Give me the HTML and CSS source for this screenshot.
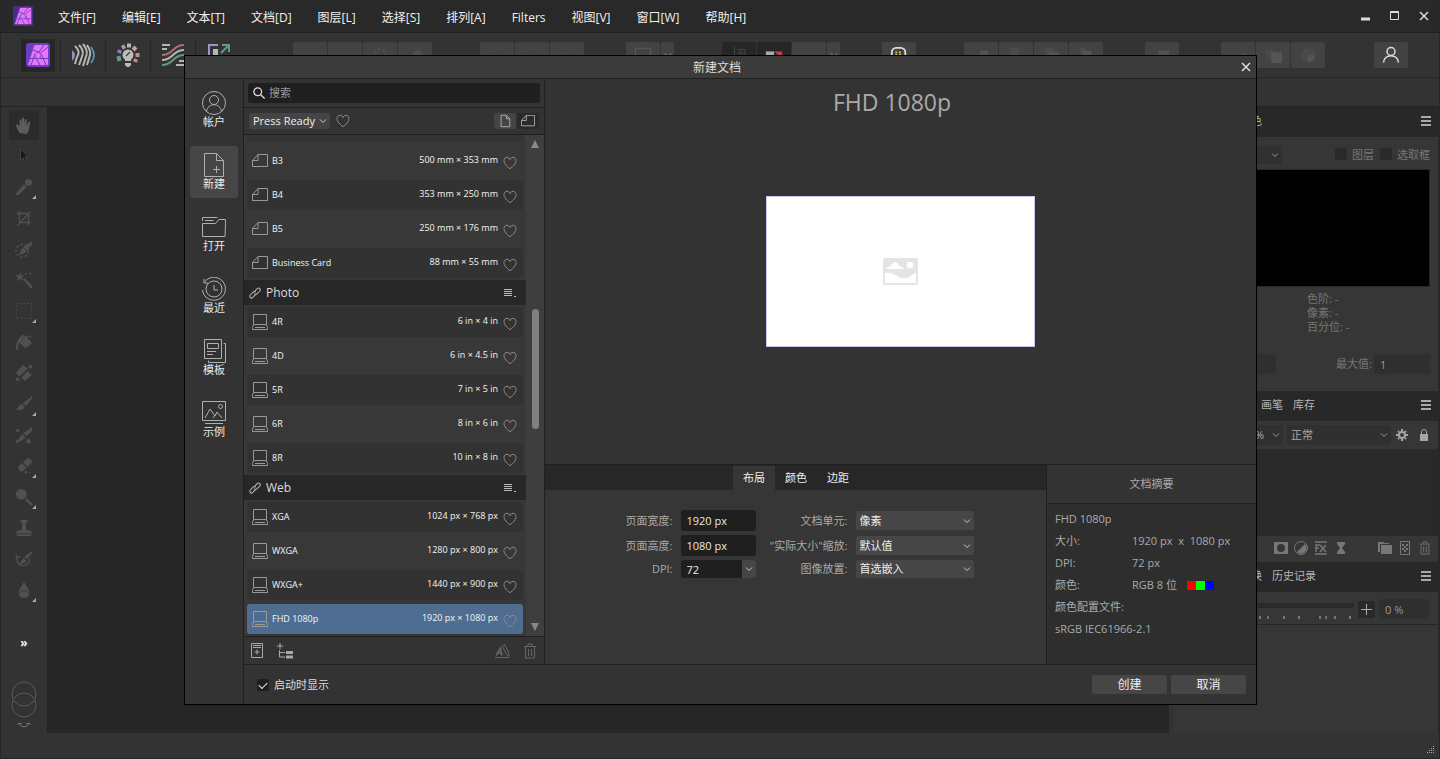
FILE: index.html
```html
<!DOCTYPE html>
<html lang="zh-CN">
<head>
  <meta charset="UTF-8">
  <meta name="viewport" content="width=device-width, initial-scale=1.0">
  <title>新建文档</title>
  <link rel="stylesheet" href="styles.css">
</head>
<body>
  <!-- shared icons -->
  <svg class="sprite" aria-hidden="true">
    <symbol id="heart" viewBox="0 0 14 14"><path d="M7 12.7C4 10.6 1 7.600 1 4.600 1 2.600 2.300 1.300 4 1.300c1.500 0 2.600.9 3 2.400.4-1.500 1.500-2.400 3-2.400 1.700 0 3 1.300 3 3.300 0 3-3 6-6 8.100z"/></symbol>
    <symbol id="land" viewBox="0 0 16 14"><path d="M.5 12.500V6.500L6 .5h9.500v12zM.5 6.500H6v-6"/></symbol>
    <symbol id="screen" viewBox="0 0 16 16"><path d="M1.500 10.500V.5h13v10zM1.500 10.500l-1 3v2h15v-2l-1-3M3 13.500h10"/></symbol>
    <symbol id="link" viewBox="0 0 12 12"><g transform="rotate(-45 6 6)"><path d="M5.500 7.500H1a1.500 1.500 0 0 1-1.500-1.500A2 2 0 0 1 1.500 4H5a2 2 0 0 1 2 2M6.500 4.500H11a1.500 1.500 0 0 1 1.500 1.500A2 2 0 0 1 10.500 8H7a2 2 0 0 1-2-2"/></g></symbol>
    <symbol id="caret" viewBox="0 0 8 8"><path d="M1 2.500 4 5.500 7 2.500"/></symbol>
    <symbol id="lines" viewBox="0 0 14 10"><path d="M1 1.500h8M1 3.500h8M1 5.500h8M1 7.500h8M11 8.500h2"/></symbol>
    <symbol id="burger" viewBox="0 0 10 10"><path d="M0 1h10M0 5h10M0 9h10"/></symbol>
    <symbol id="cross" viewBox="0 0 10 10"><path d="M1 1l8 8M9 1 1 9"/></symbol>
    <symbol id="aperture" viewBox="0 0 24 24">
      <path fill="#e874f7" d="M8.500 2H21q1 0 1 1v18q0 1-1 1H2z"/>
      <path fill="none" stroke="#6b3fc4" d="M7 7l7 2.500M18 2l-5 7M9 11 5 22M2 15.500h8M10 15l4 7M13 15.500h9M15 11l5 11M14.500 10 22 4"/>
      <circle cx="12" cy="12.500" r="3" fill="#e874f7" stroke="#8a50d8"/>
    </symbol>
    <symbol id="bin" viewBox="0 0 14 16"><path d="M1 3.500h12M5 3V1h4v2M2.500 4v11h9V4M5.500 6v7M8.500 6v7"/></symbol>
  </svg>

  <div class="app">
    <header class="menubar">
      <svg class="logo" viewBox="0 0 24 24"><rect width="24" height="24" rx="1" fill="#4b2b86"/><use href="#aperture"/></svg>
      <nav class="menus">
        <button>文件[F]</button>
        <button>编辑[E]</button>
        <button>文本[T]</button>
        <button>文档[D]</button>
        <button>图层[L]</button>
        <button>选择[S]</button>
        <button>排列[A]</button>
        <button>Filters</button>
        <button>视图[V]</button>
        <button>窗口[W]</button>
        <button>帮助[H]</button>
      </nav>
      <div class="win-buttons">
        <button aria-label="最小化"><svg viewBox="0 0 10 10"><path d="M0 8h9" stroke-width="3"/></svg></button>
        <button aria-label="最大化"><svg viewBox="0 0 10 10"><path d="M.5.5h8v8h-8zM0 1.500h9" stroke-width="1"/></svg></button>
        <button aria-label="关闭"><svg><use href="#cross"/></svg></button>
      </div>
    </header>

    <div class="toolbar">
      <div class="personas">
        <button class="active" aria-label="照片"><svg viewBox="0 0 24 24"><rect width="24" height="24" rx="3" fill="#6b3fc4"/><use href="#aperture"/></svg></button>
        <button aria-label="液化"><svg viewBox="0 0 24 24" fill="none" stroke-width="2"><path fill="#a38bc0" d="M1 7q6 5 0 11z"/><path stroke="#b5b5b5" d="M4 3q5 5 3 9t-3 9M8 2q5 5 3.500 10T8 22M12 1q5 6 3.500 11T12 23M16 2q4 6 3 10t-3 10"/><path stroke="#5d8aa8" d="M20 4q3 4 3 8t-3 8"/></svg></button>
        <button aria-label="冲印"><svg viewBox="0 0 24 24" fill="none" stroke-width="4"><path stroke="#b58fb0" d="M6 5 9 3"/><path stroke="#b5b5b5" d="M11 2.500h4"/><path stroke="#c9a0a5" d="M17 4l3 3"/><path stroke="#c58a90" d="M21.500 10v4M20 16l-1 3"/><path stroke="#8e86b8" d="M4 7l-1 3"/><path stroke="#5da087" d="M2.500 13l1 5"/><circle cx="12" cy="12" r="5.500" fill="#bcbcbc"/><path fill="#bcbcbc" d="M9 15h6v3H9zM9 20h6v2l-2 2h-2l-2-2z"/><path stroke="#444" stroke-width="1.500" d="M10 13l4-4"/></svg></button>
        <button aria-label="色调映射"><svg viewBox="0 0 24 24" fill="none" stroke-width="2"><path stroke="#b5b5b5" d="M1 2h8M1 6h5M18 18h5M15 22h8"/><path stroke="#a87075" d="M1 12c12 0 10-10 22-10"/><path stroke="#b5b5b5" d="M1 17c12 0 10-10 22-10"/><path stroke="#5f9c7c" d="M1 22c12 0 10-10 22-10"/></svg></button>
        <button aria-label="导出"><svg viewBox="0 0 24 24" fill="none" stroke-width="2"><path stroke="#9a97c4" d="M2 14V2h9"/><path fill="#b5b5b5" d="M6 6h5v12H6z"/><path stroke="#5f9c86" d="M14 10l8-8M15 2h7v7"/></svg></button>
      </div>
      <div class="tool-group first">
        <button><svg viewBox="0 0 20 20"><path d="M2 13h8"/></svg></button>
        <button><svg viewBox="0 0 20 20"><path d="M4 15a7 7 0 0 1 12-6l-6 6"/></svg></button>
        <button><svg viewBox="0 0 20 20"><circle cx="10" cy="10" r="6" stroke-dasharray="3 2" stroke-width="4"/></svg></button>
        <button><svg viewBox="0 0 20 20"><path d="M3 3l9 9"/><circle cx="13" cy="11" r="6" fill="#505050"/></svg></button>
      </div>
      <div class="tool-group">
        <button><svg viewBox="0 0 20 20"><path stroke-dasharray="2 2" d="M2 3h16v12H2z"/></svg></button>
        <button><svg viewBox="0 0 20 20"><path stroke-dasharray="2 2" d="M2 3h16v12H2z"/></svg></button>
        <button><svg viewBox="0 0 20 20"><path stroke-dasharray="2 2" d="M2 3h16v12H2zM6 7h8v5H6z"/></svg></button>
      </div>
      <div class="tool-group near">
        <button><svg viewBox="0 0 20 20"><path stroke="#606060" d="M1.500 2.500h17v14h-17z"/></svg></button>
        <button class="drop" aria-label="选项"><svg><use href="#caret"/></svg></button>
      </div>
      <div class="tool-group">
        <button class="dark"><svg viewBox="0 0 20 20"><path stroke="#4a4a4a" d="M5 1v14M8 4h9v9M12 4v9M8 8h9"/></svg></button>
        <button class="dark"><svg viewBox="0 0 20 20"><path fill="#aaa" stroke="none" d="M1 6h9v5H1z"/><path fill="#d23545" stroke="none" d="M10 6h9v8z"/></svg></button>
        <button><svg viewBox="0 0 20 20"><path d="M3 11l4-4 4 4"/></svg></button>
        <button class="drop" aria-label="选项"><svg><use href="#caret"/></svg></button>
      </div>
      <div class="tool-group near">
        <button aria-label="助手"><svg viewBox="0 0 20 20"><rect x="2" y="2" width="15" height="13" rx="5" stroke="#ddd" stroke-width="2"/><path stroke="#e0c060" stroke-width="2" stroke-dasharray="2 2" d="M6 7h7M6 10h7"/></svg></button>
      </div>
      <div class="tool-group">
        <button><svg viewBox="0 0 20 20"><path fill="#535353" stroke="none" d="M9 5h9v9H9z"/></svg></button>
        <button><svg viewBox="0 0 20 20"><path fill="#4b4b4b" stroke="none" d="M3 2h11v10H3z"/></svg></button>
        <button><svg viewBox="0 0 20 20"><path fill="#4b4b4b" stroke="none" d="M3 2h10v8H3z"/><path fill="#555" stroke="none" d="M8 7h11v9H8z"/></svg></button>
        <button><svg viewBox="0 0 20 20"><path fill="#4b4b4b" stroke="none" d="M3 2h6v6H3z"/><path fill="#555" stroke="none" d="M6 5h10v9H6z"/></svg></button>
      </div>
      <div class="tool-group near">
        <button><svg viewBox="0 0 20 20"><path fill="#525252" stroke="none" d="M6 5h12v5H6z"/></svg></button>
      </div>
      <div class="tool-group near">
        <button><svg viewBox="0 0 20 20"><path fill="#555" stroke="none" d="M15 8h3v8h-3z"/></svg></button>
        <button><svg viewBox="0 0 20 20"><circle cx="7" cy="9" r="6" stroke="none" fill="#494949"/><path fill="#555" stroke="none" d="M8 7h12v12H8z"/></svg></button>
        <button><svg viewBox="0 0 20 20"><circle cx="10" cy="10" r="8" stroke="none" fill="#4a4a4a"/><path fill="#555" stroke="none" d="M10 10h8a8 8 0 0 1-8 8z"/></svg></button>
      </div>
      <button class="account" aria-label="帐户"><svg viewBox="0 0 18 18"><circle cx="9" cy="5.500" r="4"/><path d="M1.500 16.500c1-9 14-9 15 0"/></svg></button>
    </div>

    <div class="context-bar"></div>

    <main class="workspace">
      <aside class="tools">
        <button class="active" aria-label="视图工具"><svg viewBox="0 0 20 20"><path d="M5 19C3 16 2 13 1 10l2-1 2 3V4h2v6l1-8h2v8l1-7 2 1v7l2-5 2 1-2 10-2 3z" class="lit"/></svg></button>
        <button aria-label="移动工具"><svg viewBox="0 0 20 20"><path fill="#181818" stroke="#484848" stroke-width="1" d="M6 2v13l3-3 2 5 2-1-2-5h4z"/></svg></button>
        <button class="more" aria-label="颜色选取器"><svg viewBox="0 0 20 20"><circle cx="15" cy="5" r="4"/><path d="M10 7l3 3-9 9H1v-2z"/></svg></button>
        <button aria-label="裁剪工具"><svg viewBox="0 0 20 20"><path class="line" d="M5 2v13h13M2 5h13v13M3 18 17 3"/></svg></button>
        <button aria-label="选择画笔"><svg viewBox="0 0 20 20"><circle class="line" cx="8" cy="12" r="7" stroke-dasharray="3 2"/><path d="M19 1v4l-6 6-4-3zM9 9l4 3q-3 5-9 4 2-1 2-3 0-3 3-4z"/></svg></button>
        <button aria-label="魔棒"><svg viewBox="0 0 20 20"><path d="M6 1l1 4 4-1-3 3 2 4-4-2-4 2 1-4-3-3 4 1zM9 9l2-1 8 8v3h-2zM11 2h2v2h-2zM16 2h2v2h-2z"/></svg></button>
        <button class="more" aria-label="选框"><svg viewBox="0 0 20 20"><path class="thin" stroke-dasharray="2 2" d="M1.500 1.500h17v17h-17z"/></svg></button>
        <button aria-label="填充"><svg viewBox="0 0 20 20"><path d="M3 19H1q0-13 8-17l2 1-7 9zM12 3l7 8-7 6-7-6z"/><path class="line" d="M10 5q4-3 8 0"/></svg></button>
        <button aria-label="渐变"><svg viewBox="0 0 20 20"><path d="M9 1l5 4-9 9-4-4zM14 8l5 4-8 7-4-4z"/><path class="cut" d="M3 17 17 3"/><circle cx="3" cy="17" r="2"/><circle cx="17" cy="3" r="2"/></svg></button>
        <button class="more" aria-label="画笔"><svg viewBox="0 0 20 20"><path d="M19 1v3l-7 8-3-3zM8 10l3 3q-3 5-10 3 3-1 3-3 1-3 4-3z"/></svg></button>
        <button aria-label="像素画笔"><svg viewBox="0 0 20 20"><path d="M19 1v4l-6 6-4-3zM8 9l4 4-6 4-3-1z"/><circle cx="3" cy="5" r="2"/><circle cx="3" cy="17" r="2"/><circle cx="15" cy="17" r="2.500"/></svg></button>
        <button class="more" aria-label="擦除"><svg viewBox="0 0 20 20"><path d="M12 3q3-3 6 0 2 3-1 5l-3 3-5-5zM8 7l5 5-3 3q-3 2-5 0-3-3-1-5z"/><circle cx="12" cy="17" r="1.500"/><circle cx="17" cy="17" r="1"/></svg></button>
        <button class="more" aria-label="减淡"><svg viewBox="0 0 20 20"><circle cx="7" cy="7" r="6"/><path d="M11 13l2-2 7 7-2 2z"/></svg></button>
        <button aria-label="克隆"><svg viewBox="0 0 20 20"><path d="M6 1h8v2l-2 2q0 6 1 7l6 2v2H1v-2l6-2q1-1 1-7L6 3zM2 17h16v2H2z"/></svg></button>
        <button aria-label="撤消画笔"><svg viewBox="0 0 20 20"><path class="line" d="M3 7a7 7 0 1 0 13 2M1 4l1 5 4-2"/><path d="M19 1v3l-6 6-3-2zM9 9l4 3q-3 4-8 3l2-3z"/></svg></button>
        <button class="more" aria-label="模糊"><svg viewBox="0 0 20 20"><path d="M10 1q6 9 6 12a6 6 0 0 1-12 0Q4 10 10 1z"/><path class="cut" d="M5 13q5-4 10 0"/></svg></button>
        <button class="expand">»</button>
        <svg class="swatches" viewBox="0 0 26 48"><circle cx="13" cy="13" r="12"/><circle cx="13" cy="24" r="12"/><path stroke="#777" d="M8 42c1 5 9 5 10 0M6 44l2-2 3 1M20 44l-2-2-3 1"/></svg>
      </aside>

      <div class="canvas"></div>

      <aside class="panels">
        <div class="panel-head"><span>色</span><button aria-label="菜单"><svg><use href="#burger"/></svg></button></div>
        <div class="panel-body histogram">
          <div class="channel-row">
            <span class="select channel"><select aria-label="通道"></select><svg><use href="#caret"/></svg></span>
            <label><input type="checkbox">图层</label>
            <label><input type="checkbox">选取框</label>
          </div>
          <div class="graph"></div>
          <div class="stats">
            <p>色阶: -</p>
            <p>像素: -</p>
            <p>百分位: -</p>
          </div>
          <div class="range-row">
            <input type="text" class="field min" aria-label="最小值">
            <label for="max">最大值:</label>
            <input type="text" class="field" id="max" value="1">
          </div>
        </div>

        <div class="panel-head"><span>画笔</span><span>库存</span><button aria-label="菜单"><svg><use href="#burger"/></svg></button></div>
        <div class="blend-row">
          <span class="select opacity"><select aria-label="不透明度"><option>%</option></select><svg><use href="#caret"/></svg></span>
          <span class="select blend"><select aria-label="混合模式"><option>正常</option></select><svg><use href="#caret"/></svg></span>
          <button aria-label="设置"><svg viewBox="0 0 12 12"><circle cx="6" cy="6" r="3" fill="none" stroke="#a5a5a5" stroke-width="2"/><path stroke="#a5a5a5" stroke-width="2" d="M6 0v2M6 10v2M0 6h2M10 6h2M2 2l1 1M9 9l1 1M10 2 9 3M3 9l-1 1"/></svg></button>
          <button aria-label="锁定"><svg viewBox="0 0 12 12"><path fill="#a5a5a5" d="M2 5h8v7H2z"/><path fill="none" stroke="#a5a5a5" d="M3.500 6V3a2.500 2.500 0 0 1 5 0v3"/></svg></button>
        </div>
        <div class="layer-list"></div>
        <div class="layer-tools">
          <button aria-label="蒙版"><svg viewBox="0 0 14 14"><path fill="#777" fill-rule="evenodd" d="M0 1h14v12H0zM7 3a4 4 0 1 0 0 8 4 4 0 0 0 0-8z"/></svg></button>
          <button aria-label="调整"><svg viewBox="0 0 14 14"><circle cx="7" cy="7" r="6.500" fill="none" stroke="#777"/><path fill="#777" d="M11 3a5.500 5.500 0 0 1-8 8z"/></svg></button>
          <button aria-label="效果"><svg viewBox="0 0 14 14"><path fill="none" stroke="#777" stroke-width="1.500" d="M1 1h12M1 13h12M2 11V4h4M2 7h3M6 4l6 7M12 4l-6 7"/></svg></button>
          <button aria-label="实时滤镜"><svg viewBox="0 0 14 14"><path fill="#777" d="M3 1h8v2L8 7l3 4v2H3v-2l3-4-3-4z"/></svg></button>
          <button class="push" aria-label="编组"><svg viewBox="0 0 14 14"><path fill="#777" d="M0 1h5l1 1h5v1H2v8H0zM3 4h11v9H3z"/></svg></button>
          <button aria-label="像素图层"><svg viewBox="0 0 14 14"><path fill="none" stroke="#777" d="M2.500.5h9v13h-9z"/><path fill="none" stroke="#777" stroke-width="2" stroke-dasharray="2 2" d="M4 4h6M6 6h4M4 8h6M6 10h4"/></svg></button>
          <button aria-label="删除"><svg><use href="#bin"/></svg></button>
        </div>

        <div class="panel-head low"><span>换</span><span>历史记录</span><button aria-label="菜单"><svg><use href="#burger"/></svg></button></div>
        <div class="history-row">
          <span class="slider">
            <input type="range" aria-label="历史位置" value="0">
            <svg viewBox="0 0 96 4" preserveAspectRatio="xMaxYMid meet"><path d="M2 0v3M26 0v3M41 0v3M62 0v3M77 0v3M92 0v3" stroke="#777" stroke-width="2"/><path d="M10 0v3M68 0v3" stroke="#aaa"/></svg>
          </span>
          <button aria-label="添加"><svg viewBox="0 0 11 11"><path d="M5.500 0v11M0 5.500h11"/></svg></button>
          <input type="text" class="field" aria-label="位置" value="0 %">
        </div>
        <div class="history-list"></div>
      </aside>
    </main>

    <footer class="statusbar"><svg viewBox="0 0 8 8"><path stroke="#aaa" stroke-dasharray="1 1" d="M6 .5h1M4 2.500h4M2 4.500h6M0 6.500h8"/></svg></footer>
  </div>

  <div class="overlay">
    <section class="dialog" role="dialog" aria-labelledby="dialog-title">
      <div class="dialog-title">
        <h1 id="dialog-title">新建文档</h1>
        <button aria-label="关闭"><svg><use href="#cross"/></svg></button>
      </div>
      <div class="dialog-body">
        <nav class="side">
          <button><svg viewBox="0 0 24 24"><circle cx="12" cy="12" r="11.500"/><circle cx="12" cy="9" r="4.500"/><path d="M4.500 20.500c1-9 14-9 15 0"/></svg>帐户</button>
          <button class="active"><svg viewBox="0 0 24 24"><path d="M2.500.5h12l7 7v16h-19zM14.500.5v7h7M14.500 13v7M11 16.500h7"/></svg>新建</button>
          <button><svg viewBox="0 0 24 24"><path d="M.5 6V2.500h15M3 5.500h8.500M.5 8.500h13l3.500-4h6.500v4l-.5 13H.5z"/></svg>打开</button>
          <button><svg viewBox="0 0 24 24"><path d="M3 4.500A11.500 11.500 0 1 1 .5 13M2 2v4h4M12 8v5h4"/><circle cx="12" cy="12" r="8"/></svg>最近</button>
          <button><svg viewBox="0 0 24 24"><path d="M2.500.5h17v19h-17zM21.500 4.500h2v19h-17v-2M5.500 4.500h11v5h-11zM5 12.500h9M5 15.500h6"/></svg>模板</button>
          <button><svg viewBox="0 0 24 24"><path d="M.5.5h23v19H.5zM3 17l5-9 5 7 2-4 5 6M11 17l2-3M3 22.500h18"/><circle cx="18.500" cy="5.500" r="2"/></svg>示例</button>
        </nav>

        <div class="dialog-main">
          <div class="dialog-columns">
            <div class="presets">
              <div class="search-row">
                <svg viewBox="0 0 14 14"><circle cx="5.500" cy="5.500" r="4.500"/><path d="M9 9l4.500 4.500"/></svg>
                <input type="search" placeholder="搜索" aria-label="搜索">
              </div>
              <div class="filter-row">
                <span class="select category"><select aria-label="类别"><option>Press Ready</option></select><svg><use href="#caret"/></svg></span>
                <button class="fav" aria-label="收藏夹"><svg><use href="#heart"/></svg></button>
                <span class="orient">
                  <button class="active" aria-label="纵向"><svg viewBox="0 0 16 16"><path d="M3.500 1.500h6l4 4v9h-10zM9.500 1.500v4h4"/></svg></button>
                  <button aria-label="横向"><svg viewBox="0 0 16 14"><use href="#land"/></svg></button>
                </span>
              </div>
              <div class="list-wrap">
                <div class="list">
                  <div class="row-cut"></div>
                  <ul>
                    <li><button class="preset"><svg><use href="#land"/></svg><span>B3</span><span class="size">500 mm × 353 mm</span></button><button class="fav" aria-label="收藏"><svg><use href="#heart"/></svg></button></li>
                    <li class="shade"><button class="preset"><svg><use href="#land"/></svg><span>B4</span><span class="size">353 mm × 250 mm</span></button><button class="fav" aria-label="收藏"><svg><use href="#heart"/></svg></button></li>
                    <li><button class="preset"><svg><use href="#land"/></svg><span>B5</span><span class="size">250 mm × 176 mm</span></button><button class="fav" aria-label="收藏"><svg><use href="#heart"/></svg></button></li>
                    <li class="shade"><button class="preset"><svg><use href="#land"/></svg><span>Business Card</span><span class="size">88 mm × 55 mm</span></button><button class="fav" aria-label="收藏"><svg><use href="#heart"/></svg></button></li>
                  </ul>
                  <h2><svg><use href="#link"/></svg>Photo<button aria-label="类别菜单"><svg><use href="#lines"/></svg></button></h2>
                  <ul>
                    <li class="shade"><button class="preset"><svg><use href="#screen"/></svg><span>4R</span><span class="size">6 in × 4 in</span></button><button class="fav" aria-label="收藏"><svg><use href="#heart"/></svg></button></li>
                    <li><button class="preset"><svg><use href="#screen"/></svg><span>4D</span><span class="size">6 in × 4.5 in</span></button><button class="fav" aria-label="收藏"><svg><use href="#heart"/></svg></button></li>
                    <li class="shade"><button class="preset"><svg><use href="#screen"/></svg><span>5R</span><span class="size">7 in × 5 in</span></button><button class="fav" aria-label="收藏"><svg><use href="#heart"/></svg></button></li>
                    <li><button class="preset"><svg><use href="#screen"/></svg><span>6R</span><span class="size">8 in × 6 in</span></button><button class="fav" aria-label="收藏"><svg><use href="#heart"/></svg></button></li>
                    <li class="shade"><button class="preset"><svg><use href="#screen"/></svg><span>8R</span><span class="size">10 in × 8 in</span></button><button class="fav" aria-label="收藏"><svg><use href="#heart"/></svg></button></li>
                  </ul>
                  <h2><svg><use href="#link"/></svg>Web<button aria-label="类别菜单"><svg><use href="#lines"/></svg></button></h2>
                  <ul>
                    <li class="shade"><button class="preset"><svg><use href="#screen"/></svg><span>XGA</span><span class="size">1024 px × 768 px</span></button><button class="fav" aria-label="收藏"><svg><use href="#heart"/></svg></button></li>
                    <li><button class="preset"><svg><use href="#screen"/></svg><span>WXGA</span><span class="size">1280 px × 800 px</span></button><button class="fav" aria-label="收藏"><svg><use href="#heart"/></svg></button></li>
                    <li class="shade"><button class="preset"><svg><use href="#screen"/></svg><span>WXGA+</span><span class="size">1440 px × 900 px</span></button><button class="fav" aria-label="收藏"><svg><use href="#heart"/></svg></button></li>
                    <li class="selected"><button class="preset"><svg><use href="#screen"/></svg><span>FHD 1080p</span><span class="size">1920 px × 1080 px</span></button><button class="fav" aria-label="收藏"><svg><use href="#heart"/></svg></button></li>
                  </ul>
                </div>
                <div class="scrollbar">
                  <svg viewBox="0 0 8 8"><path d="M4 0l4 8H0z"/></svg>
                  <div class="track"><div class="thumb"></div></div>
                  <svg viewBox="0 0 8 8"><path d="M4 8l4-8H0z"/></svg>
                </div>
              </div>
              <div class="list-tools">
                <button aria-label="新建预设"><svg viewBox="0 0 16 16"><path d="M2.500.5h11v14h-11zM4 2.500h8M4 4.500h8M8 6.500v5M5.500 9h5"/></svg></button>
                <button aria-label="新建类别"><svg viewBox="0 0 16 16"><path d="M3 0v6M0 3h6M2.500 7v7H8M2.500 9.500H8"/><path stroke-width="3" d="M9 9.500h7M9 14h7"/></svg></button>
                <button class="push dim" aria-label="重命名"><svg viewBox="0 0 16 16"><path d="M1 14.500h14"/><path stroke-width="1.500" d="M2 12.500 6.500 5l1.500 7.500M4 10h4"/><path d="M8.500 3.500l2-2 4.500 9v3l-2.500-2z"/></svg></button>
                <button class="dim" aria-label="删除"><svg><use href="#bin"/></svg></button>
              </div>
            </div>

            <div class="details">
              <div class="preview">
                <h2>FHD 1080p</h2>
                <div class="page-area">
                  <div class="page">
                    <svg viewBox="0 0 35 27"><rect width="35" height="27" rx="2" fill="#e4e4e4"/><path fill="#fff" d="M3 11q0-2 2-2 2 0 3-2 2-3 4-3t4 3q1 2 3 2l2 2zM2 15q6-1 12 3 5 3 9 2 3 0 6-3 2-2 4-2v9q0 1-1 1H3q-1 0-1-1z"/><circle cx="27" cy="7" r="3.300" fill="#fff"/></svg>
                  </div>
                </div>
              </div>
              <div class="settings">
                <div class="options">
                  <div class="tabs">
                    <button class="active">布局</button>
                    <button>颜色</button>
                    <button>边距</button>
                  </div>
                  <form class="layout-form">
                    <label for="width">页面宽度:</label>
                    <input type="text" class="tall" id="width" value="1920 px">
                    <label for="unit">文档单元:</label>
                    <span class="select"><select id="unit"><option>像素</option></select><svg><use href="#caret"/></svg></span>
                    <label for="height">页面高度:</label>
                    <input type="text" class="tall" id="height" value="1080 px">
                    <label for="zoom">"实际大小"缩放:</label>
                    <span class="select"><select id="zoom"><option>默认值</option></select><svg><use href="#caret"/></svg></span>
                    <label for="dpi">DPI:</label>
                    <span class="combo"><input type="text" id="dpi" value="72"><button type="button" aria-label="DPI 列表"><svg><use href="#caret"/></svg></button></span>
                    <label for="place">图像放置:</label>
                    <span class="select short"><select id="place"><option>首选嵌入</option></select><svg><use href="#caret"/></svg></span>
                  </form>
                </div>
                <div class="summary">
                  <h3>文档摘要</h3>
                  <dl>
                    <dt class="wide">FHD 1080p</dt>
                    <dt>大小:</dt><dd>1920 px&nbsp; x&nbsp; 1080 px</dd>
                    <dt>DPI:</dt><dd>72 px</dd>
                    <dt>颜色:</dt><dd>RGB 8 位<span class="rgb"><i></i><i></i><i></i></span></dd>
                    <dt class="wide">颜色配置文件:</dt>
                    <dd class="wide">sRGB IEC61966-2.1</dd>
                  </dl>
                </div>
              </div>
            </div>
          </div>

          <div class="dialog-footer">
            <label><input type="checkbox" checked>启动时显示</label>
            <button class="push">创建</button>
            <button>取消</button>
          </div>
        </div>
      </div>
    </section>
  </div>
</body>
</html>
```
FILE: styles.css
```css
* {
  box-sizing: border-box;
}

body {
  margin: 0;
  background-color: #262626;
  color: #ddd;
  font-family: "Open Sans", "Noto Sans CJK SC", sans-serif;
  font-size: 11px;
  line-height: 14px;
}

button, input, select {
  margin: 0;
  padding: 0;
  border: none;
  background: none;
  color: inherit;
  font: inherit;
}

h1, h2, h3, p, ul, dl, dd {
  margin: 0;
  padding: 0;
  font-weight: normal;
  list-style: none;
}

svg {
  display: block;
  flex: none;
}

.sprite {
  position: absolute;
  width: 0;
  height: 0;
}

/* Application window */
.app {
  display: flex;
  flex-direction: column;
  height: 100vh;
  border: 1px solid #262626;
  border-top: none;
  background-color: #333;
}

.menubar {
  display: flex;
  align-items: center;
  height: 33px;
  padding: 0 10px 0 12px;
  background-color: #292929;
  border-bottom: 1px solid #202020;
}

.logo {
  width: 20px;
  height: 20px;
}

.menus {
  display: flex;
  flex: 1;
  padding: 3px 0 0 12px;
  font-size: 12px;
  color: #f0f0f0;
}

.menus button {
  padding: 0 13px;
}

.win-buttons {
  display: flex;
  gap: 19px;
}

.win-buttons svg {
  width: 10px;
  height: 10px;
  fill: none;
  stroke: #ddd;
  stroke-width: 1.5;
}

.toolbar {
  display: flex;
  align-items: center;
  height: 45px;
  padding-left: 15px;
  border-bottom: 1px solid #262626;
}

.personas {
  display: flex;
}

.personas button {
  display: flex;
  justify-content: center;
  align-items: center;
  width: 45px;
  height: 33px;
  border-right: 1px solid #262626;
}

.personas button:last-child {
  border: none;
}

.personas .active {
  background: linear-gradient(#262626, #262626) 5px 0 / 34px 33px no-repeat;
}

.personas svg {
  width: 24px;
  height: 24px;
}

.tool-group {
  display: flex;
  gap: 1px;
  margin-left: 48px;
}

.tool-group.first {
  margin-left: 52px;
}

.tool-group.near {
  margin-left: 42px;
}

.tool-group button, .account {
  display: flex;
  justify-content: center;
  align-items: center;
  width: 34px;
  height: 26px;
  border-radius: 2px;
  background-color: #434343;
}

.tool-group .drop {
  width: 13px;
}

.tool-group .dark {
  background-color: #262626;
}

.tool-group svg {
  width: 18px;
  height: 18px;
  fill: none;
  stroke: #4c4c4c;
}

.tool-group .drop svg {
  width: 8px;
  height: 8px;
  stroke: #999;
}

.account {
  margin: 0 31px 0 auto;
}

.account svg {
  width: 18px;
  height: 18px;
  fill: none;
  stroke: #ddd;
  stroke-width: 1.5;
}

.context-bar {
  height: 29px;
  border-bottom: 1px solid #222;
}

.workspace {
  display: flex;
  flex: 1;
  min-height: 0;
}

.tools {
  display: flex;
  flex-direction: column;
  align-items: center;
  gap: 1px;
  width: 47px;
  padding-top: 3px;
  border-right: 1px solid #222;
}

.tools button {
  display: flex;
  justify-content: center;
  align-items: center;
  position: relative;
  width: 30px;
  height: 30px;
  border-radius: 2px;
}

.tools .active {
  background-color: #2b2b2b;
}

.tools button svg {
  width: 18px;
  height: 18px;
  fill: #505050;
}

.tools .lit {
  fill: #5d5d5d;
}

.tools .line, .tools .thin {
  fill: none;
  stroke: #505050;
}

.tools .line {
  stroke-width: 1.5;
}

.tools .cut {
  fill: none;
  stroke: #333;
}

.tools .more::after {
  content: "";
  position: absolute;
  right: 3px;
  bottom: 3px;
  border: 2px solid transparent;
  border-right-color: #aaa;
  border-bottom-color: #aaa;
}

.tools .expand {
  margin: 22px 0;
  font-size: 12px;
  font-weight: bold;
  color: #eee;
}

.swatches {
  width: 26px;
  height: 48px;
  fill: none;
  stroke: #5a5a5a;
}

.canvas {
  flex: 1;
  background-color: #262626;
}

/* Right hand panels */
.panels {
  display: flex;
  flex-direction: column;
  width: 270px;
  padding-left: 5px;
  border-right: 1px solid #292929;
  color: #777;
}

.panel-head {
  display: flex;
  align-items: center;
  gap: 10px;
  height: 30px;
  padding: 0 7px 2px 87px;
  background-color: #282828;
  color: #b5b5b5;
}

.panel-head:first-child, .panel-head.low {
  padding-left: 77px;
}

.panel-head button {
  margin-left: auto;
}

.panel-head svg {
  width: 10px;
  height: 10px;
  stroke: #aaa;
  stroke-width: 2;
}

.panel-body, .blend-row, .layer-tools, .history-row, .history-list {
  background-color: #363636;
}

.histogram {
  height: 254px;
  padding: 8px 8px 0 8px;
}

.channel-row, .range-row {
  display: flex;
  align-items: center;
}

.channel-row {
  justify-content: flex-end;
  gap: 6px;
  height: 20px;
}

.channel-row label {
  display: flex;
  gap: 5px;
}

input[type="checkbox"] {
  appearance: none;
  width: 12px;
  height: 12px;
  border-radius: 2px;
  background-color: #2a2a2a;
}

.select {
  display: block;
  position: relative;
  height: 20px;
  border-radius: 2px;
}

.select select {
  appearance: none;
  display: block;
  width: 100%;
  height: 100%;
  padding: 0 20px 0 4px;
}

.select svg, .combo svg {
  width: 8px;
  height: 8px;
  fill: none;
  stroke: #ccc;
}

.panels .select svg {
  stroke: #999;
}

.select svg {
  position: absolute;
  right: 3px;
  top: 50%;
  transform: translateY(-50%);
  pointer-events: none;
}

.channel {
  width: 100px;
  height: 18px;
  margin-right: auto;
  background-color: #303030;
}

.graph {
  height: 118px;
  margin-top: 4px;
  border: 1px solid #282828;
  background-color: #000;
}

.stats {
  padding: 5px 0 0 125px;
}

.range-row {
  gap: 2px;
  margin-top: 20px;
}

.field {
  width: 56px;
  height: 20px;
  padding-left: 6px;
  border-radius: 3px;
  background-color: #2f2f2f;
  color: #999;
}

.field.min {
  width: 94px;
  margin-right: auto;
}

.blend-row {
  display: flex;
  justify-content: flex-end;
  align-items: center;
  height: 29px;
  padding-right: 8px;
  border-bottom: 1px solid #2c2c2c;
  color: #aaa;
}

.blend-row .select {
  background-color: #303030;
}

.opacity {
  width: 60px;
}

.opacity select {
  padding-left: 32px;
  padding-right: 0;
}

.blend {
  width: 104px;
  margin: 0 5px 0 4px;
}

.blend-row button {
  margin-left: 10px;
}

.blend-row .blend + button {
  margin-left: 0;
}

.blend-row button svg {
  width: 12px;
  height: 12px;
}

.layer-list {
  height: 86px;
  background-color: #292929;
}

.layer-tools {
  display: flex;
  align-items: center;
  gap: 6px;
  height: 26px;
  padding: 0 6px 2px 100px;
}

.push {
  margin-left: auto;
}

.layer-tools svg {
  width: 14px;
  height: 14px;
  fill: none;
  stroke: none;
}

.layer-tools button:last-child svg {
  stroke: #777;
}

.history-row {
  display: flex;
  align-items: center;
  height: 33px;
  padding: 2px 9px 0 0;
  gap: 4px;
  border-bottom: 1px solid #262626;
}

.slider {
  flex: 1;
  padding-top: 4px;
}

.slider input {
  appearance: none;
  display: block;
  width: 100%;
  height: 5px;
  border-radius: 2px;
  background-color: #2a2a2a;
}

.slider input::-webkit-slider-thumb {
  appearance: none;
}

.slider svg {
  width: 100%;
  height: 4px;
  margin-top: 8px;
}

.history-row button {
  padding: 3px;
  border-radius: 2px;
  background-color: #292929;
}

.history-row button svg {
  width: 11px;
  height: 11px;
  stroke: #aaa;
}

.history-row .field {
  width: 50px;
}

.history-list {
  flex: 1;
}

.statusbar {
  display: flex;
  justify-content: flex-end;
  align-items: center;
  height: 25px;
  padding: 8px 4px 0 0;
}

.statusbar svg {
  width: 8px;
  height: 8px;
}

/* New document dialog */
.overlay {
  position: fixed;
  inset: 0;
  display: grid;
  place-items: center;
  padding: 1px 0 0 1px;
}

.dialog {
  width: 100%;
  max-width: 1073px;
  border: 1px solid #000;
  background-color: #333;
}

.dialog-title {
  display: flex;
  align-items: center;
  height: 23px;
  padding: 0 5px 0 8px;
  background-color: #3b3b3b;
  border-bottom: 1px solid #202020;
}

.dialog-title h1 {
  flex: 1;
  padding-top: 1px;
  font-size: 12px;
  text-align: center;
}

.dialog-title svg {
  width: 10px;
  height: 10px;
  stroke: #ddd;
  stroke-width: 1.5;
}

.dialog-body, .dialog-columns, .settings {
  display: flex;
}

.dialog-main, .details {
  flex: 1;
  min-width: 0;
}

.side {
  display: flex;
  flex-direction: column;
  gap: 10px;
  padding: 5px;
  border-right: 1px solid #202020;
}

.side button {
  display: flex;
  flex-direction: column;
  align-items: center;
  width: 48px;
  height: 52px;
  padding-top: 7px;
  border-radius: 3px;
  color: #e8e8e8;
}

.side .active {
  background-color: #464646;
}

.side svg {
  width: 24px;
  height: 24px;
  fill: none;
  stroke: #b0b0b0;
}

.presets {
  width: 301px;
  border-right: 1px solid #202020;
}

.search-row {
  display: flex;
  align-items: center;
  gap: 4px;
  height: 20px;
  margin: 4px;
  padding-left: 5px;
  border-radius: 3px;
  background-color: #1f1f1f;
}

.search-row svg {
  width: 12px;
  height: 12px;
  fill: none;
  stroke: #ddd;
  stroke-width: 1.5;
}

.search-row input {
  flex: 1;
  outline: none;
}

.search-row input::placeholder {
  color: #999;
}

.filter-row {
  display: flex;
  align-items: center;
  height: 28px;
  padding: 0 5px;
  border-top: 1px solid #202020;
  border-bottom: 1px solid #202020;
}

.category {
  width: 81px;
  height: 16px;
  background-color: #444;
  color: #f0f0f0;
  font-weight: 500;
}

.category select {
  padding-right: 0;
}

.fav svg {
  width: 14px;
  height: 14px;
  fill: none;
  stroke: #8a8a8a;
}

.filter-row .fav {
  margin-left: 6px;
}

.orient {
  display: flex;
  gap: 1px;
  margin-left: auto;
}

.orient button {
  display: flex;
  justify-content: center;
  align-items: center;
  width: 22px;
  height: 16px;
  border-radius: 2px;
  background-color: #2a2a2a;
}

.orient .active {
  background-color: #444;
}

.orient svg {
  width: 14px;
  height: 14px;
  fill: none;
  stroke: #b5b5b5;
}

.list-wrap {
  display: flex;
}

.list {
  flex: 1;
  background-color: #383838;
}

.row-cut {
  height: 7px;
  margin: 0 3px 2px;
  border-radius: 0 0 3px 3px;
  background-color: #333;
}

.list li {
  display: flex;
  align-items: center;
  height: 30px;
  margin: 4px 3px;
  padding-right: 6px;
  border-radius: 3px;
}

.list ul {
  padding: 0 0 2px;
  margin-top: -2px;
  overflow: hidden;
}

.list h2 + ul {
  margin-top: 0;
  padding: 0 0 2px;
}

.list h2 + ul li:first-child {
  margin-top: 2px;
}

.list ul li:last-child {
  margin-bottom: 0;
}

.list .shade {
  background-color: #323232;
}

.list .selected {
  background-color: #4e6d90;
}

.preset {
  display: flex;
  align-items: center;
  flex: 1;
  gap: 4px;
  height: 100%;
  padding-left: 5px;
  font-size: 9px;
  font-weight: 500;
  color: #f5f5f5;
}

.preset svg {
  width: 16px;
  height: 16px;
  fill: none;
  stroke: #999;
}

.preset .size {
  margin-left: auto;
  padding: 0 5px 2px 0;
}

.list .fav {
  padding-top: 4px;
}

.list h2 {
  display: flex;
  align-items: center;
  gap: 5px;
  height: 25px;
  padding: 0 9px 0 5px;
  background-color: #272727;
  font-size: 12px;
}

.list h2 svg {
  width: 12px;
  height: 12px;
  fill: none;
  stroke: #bbb;
}

.list h2 button {
  margin-left: auto;
}

.list h2 button svg {
  width: 14px;
  height: 10px;
}

.scrollbar {
  display: flex;
  flex-direction: column;
  align-items: center;
  width: 18px;
  padding: 5px 0;
  background-color: #3e3e3e;
}

.scrollbar svg {
  width: 8px;
  height: 8px;
  fill: #888;
}

.track {
  flex: 1;
  padding-top: 161px;
}

.thumb {
  width: 7px;
  height: 120px;
  border-radius: 4px;
  background-color: #808080;
}

.list-tools {
  display: flex;
  align-items: center;
  gap: 12px;
  height: 28px;
  padding: 0 6px 0 5px;
  border-top: 1px solid #202020;
}

.list-tools svg {
  width: 16px;
  height: 16px;
  fill: none;
  stroke: #aaa;
}

.list-tools .dim svg {
  stroke: #666;
}

.details {
  display: flex;
  flex-direction: column;
}

.preview {
  display: flex;
  flex-direction: column;
  flex: 1;
  border-bottom: 1px solid #202020;
}

.preview h2 {
  height: 48px;
  padding-right: 17px;
  font-size: 23px;
  line-height: 46px;
  text-align: center;
  color: #aaa;
}

.page-area {
  display: grid;
  place-items: center;
  flex: 1;
  padding-bottom: 48px;
}

.page {
  display: grid;
  place-items: center;
  width: 100%;
  max-width: 271px;
  aspect-ratio: 271 / 153;
  border: 1px solid #2222aa;
  background-color: #fff;
  box-shadow: inset 0 0 0 1px #c8c8f0;
}

.page svg {
  width: 35px;
  height: 27px;
}

.options {
  flex: 1;
  background-color: #363636;
}

.tabs {
  display: flex;
  justify-content: center;
  padding: 1px 0 0 1px;
  background-color: #272727;
}

.tabs button {
  width: 42px;
  height: 24px;
  color: #eee;
}

.tabs .active {
  background-color: #363636;
}

.layout-form {
  display: grid;
  grid-template-columns: 47px 75px 84px 118px;
  justify-content: center;
  align-items: center;
  gap: 4px 8px;
  padding: 20px 0 0 8px;
}

.layout-form label {
  text-align: right;
  white-space: nowrap;
  color: #aaa;
}

.layout-form input {
  width: 100%;
  height: 18px;
  padding-left: 6px;
  border-radius: 3px;
  background-color: #1f1f1f;
  color: #e8e8e8;
}

.layout-form .tall {
  height: 21px;
}

.layout-form .select {
  height: 19px;
  background-color: #464646;
  color: #eee;
}

.layout-form .short {
  height: 18px;
}

.combo {
  display: flex;
}

.layout-form .combo input {
  border-radius: 3px 0 0 3px;
}

.combo button {
  padding: 0 3px;
  border-radius: 0 3px 3px 0;
  background-color: #464646;
}

.summary {
  width: 210px;
  min-height: 199px;
  border-left: 1px solid #202020;
  background-color: #2e2e2e;
  color: #aaa;
}

.summary h3 {
  height: 39px;
  border-bottom: 1px solid #202020;
  background-color: #333;
  font-size: 11px;
  line-height: 38px;
  text-align: center;
}

.summary dl {
  display: grid;
  grid-template-columns: 77px 1fr;
  padding: 4px 8px;
  line-height: 22px;
}

.summary dd {
  display: flex;
  align-items: center;
}

.summary .wide {
  grid-column: 1 / -1;
}

.rgb {
  display: flex;
  margin-left: 10px;
}

.rgb i {
  width: 9px;
  height: 9px;
  background-color: #f00;
}

.rgb i:nth-child(2) {
  background-color: #0f0;
}

.rgb i:nth-child(3) {
  background-color: #00f;
}

.dialog-footer {
  display: flex;
  align-items: center;
  gap: 4px;
  height: 40px;
  padding: 0 10px 0 13px;
  border-top: 1px solid #202020;
}

.dialog-footer label {
  display: flex;
  align-items: center;
  gap: 5px;
}

.dialog-footer input {
  background-color: #1f1f1f;
}

.dialog-footer input:checked::before {
  content: "";
  display: block;
  width: 7px;
  height: 4px;
  margin: 3px auto;
  border-left: 1px solid #eee;
  border-bottom: 1px solid #eee;
  transform: rotate(-45deg);
}

.dialog-footer button {
  width: 75px;
  height: 19px;
  border-radius: 2px;
  background-color: #464646;
  color: #f0f0f0;
  font-size: 12px;
}
```
